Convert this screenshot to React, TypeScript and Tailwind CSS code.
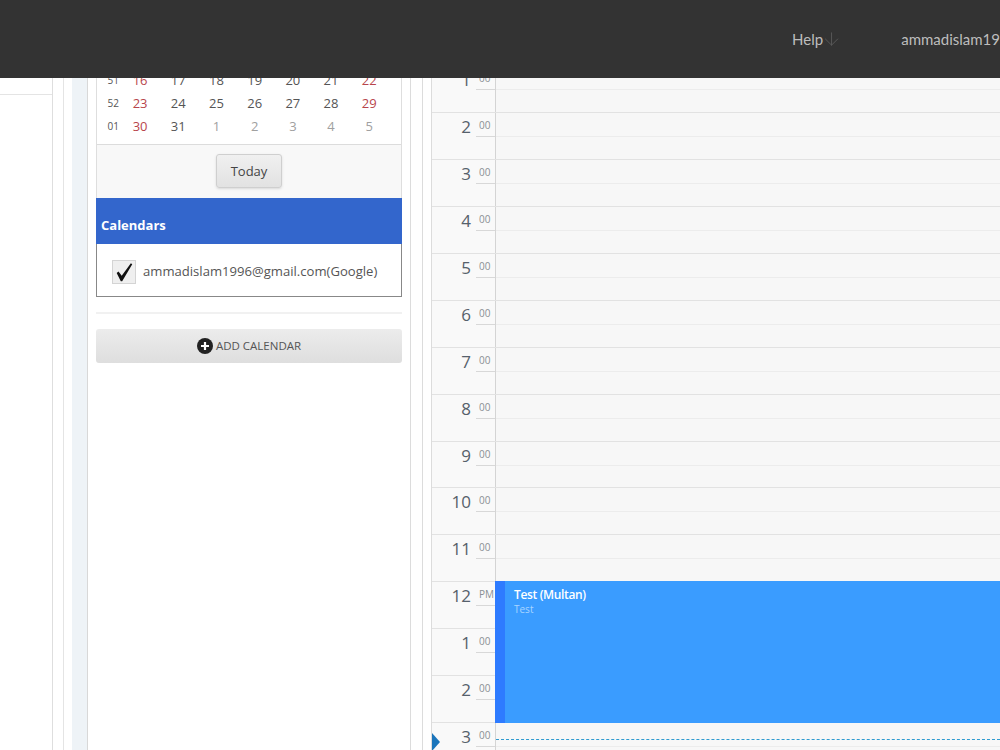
import { ArrowDown } from "lucide-react";

const weeks = [
  { week: "51", days: ["16", "17", "18", "19", "20", "21", "22"] },
  { week: "52", days: ["23", "24", "25", "26", "27", "28", "29"] },
  { week: "01", days: ["30", "31", "1", "2", "3", "4", "5"] },
];

const hours = ["1", "2", "3", "4", "5", "6", "7", "8", "9", "10", "11", "12", "1", "2", "3"];

function MonthRow({ week, days, index }: { week: string; days: string[]; index: number }) {
  return (
    <div className="grid h-[23px] grid-cols-[24px_repeat(7,38.2px)] items-center text-center text-[13px]">
      <span className="pr-[2px] text-right text-[10px] text-[#555]">{week}</span>
      {days.map((d, i) => {
        const nextMonth = index === 2 && i > 1;
        const weekend = i === 0 || i === 6;
        let color = "text-[#555]";
        if (nextMonth) color = "text-[#a0a0a0]";
        else if (weekend) color = "text-[#b8454b]";
        return (
          <span key={d} className={color}>
            {d}
          </span>
        );
      })}
    </div>
  );
}

function HourRow({ label, index }: { label: string; index: number }) {
  const noon = index === 11;
  return (
    <div className="flex h-[46.95px] shrink-0 border-b border-[#e2e2e2]">
      <div className="flex w-[64px] shrink-0 justify-end border-r border-[#d4d4d4] bg-[#f9f9f9]">
        <span className="mt-[2px] text-[17px] leading-6 text-[#56616b]">{label}</span>
        <div className="ml-[5px] h-[24px] w-[19px] border-b border-[#d8d8d8] pl-[3px] text-[10px] leading-[24px] text-[#8a8f94]">
          {noon ? "PM" : "00"}
        </div>
      </div>
      <div className="flex-1">
        <div className="h-[24px] border-b border-[#ececec]" />
      </div>
    </div>
  );
}

export default function App() {
  return (
    <div className="flex h-[750px] w-[1000px] flex-col overflow-hidden bg-white font-['Open_Sans',sans-serif]">
      <header className="z-10 flex h-[78px] shrink-0 items-center bg-[#333333] pl-[792px] font-['Lato',sans-serif] text-[15px] text-[#bdbdbd]">
        <span>Help</span>
        <ArrowDown className="-ml-[2px] h-[24px] w-[24px] text-[#5c5c5c]" strokeWidth={1} />
        <span className="ml-[59px] whitespace-nowrap">ammadislam19</span>
      </header>

      <div className="flex min-h-0 flex-1">
        <div className="w-[53px] shrink-0 border-r border-[#dedede]">
          <div className="h-[17px] border-b border-[#e4e4e4]" />
        </div>
        <div className="w-[11px] shrink-0 border-r border-[#e4e4e4]" />
        <div className="w-[8px] shrink-0" />
        <div className="w-[16px] shrink-0 border-r border-[#d8d8d8] bg-[#eef3f7]" />

        <aside className="w-[323px] shrink-0 border-r border-[#dcdcdc] pl-[8px] pr-[8px]">
          <div className="-mt-[9px] w-[306px] border-x border-[#dedede]">
            {weeks.map((w, i) => (
              <MonthRow key={w.week} week={w.week} days={w.days} index={i} />
            ))}
            <div className="mt-[6px] flex h-[54px] items-start justify-center border-t border-[#dcdcdc] bg-[#f8f8f8] pt-[9px]">
              <button className="h-[34px] w-[66px] rounded-[3px] border border-[#cfcfcf] bg-gradient-to-b from-[#f0f0f0] to-[#e2e2e2] pt-[1px] text-[13px] text-[#444] shadow-sm">
                Today
              </button>
            </div>
          </div>
          <div className="flex h-[46px] w-[306px] items-center bg-[#3366cc] pl-[5px] pt-[9px] text-[13px] font-bold text-white">
            Calendars
          </div>
          <div className="flex h-[53px] w-[306px] items-center border-x border-b border-[#888] pl-[15px] pt-[3px]">
            <span className="flex h-[24px] w-[24px] items-center justify-center border border-[#d4d4d4] bg-[#efefef]">
              <svg viewBox="0 0 24 24" className="h-[24px] w-[24px]">
                <path d="M4 13 L6 11.5 L9.5 16 L19.5 2.5 L21 3.5 L10 22 L8.5 22 Z" fill="#111" />
              </svg>
            </span>
            <span className="ml-[7px] whitespace-nowrap text-[13.1px] text-[#555]">ammadislam1996@gmail.com(Google)</span>
          </div>
          <div className="mt-[15px] h-[2px] w-[306px] bg-[#f1f1f1]" />
          <button className="mt-[15px] flex h-[34px] w-[306px] items-center justify-center rounded-[3px] bg-gradient-to-b from-[#ececec] to-[#dedede] text-[11.5px] text-[#555]">
            <svg viewBox="0 0 16 16" className="mr-[3px] h-[16px] w-[16px]">
              <circle cx="8" cy="8" r="8" fill="#222" />
              <path d="M8 4v8M4 8h8" stroke="#fff" strokeWidth="2.2" />
            </svg>
            ADD CALENDAR
          </button>
        </aside>

        <div className="w-[12px] shrink-0 border-r border-[#dcdcdc]" />
        <div className="w-[9px] shrink-0 border-r border-[#dcdcdc]" />

        <main className="relative min-w-0 flex-1 bg-[#f7f7f7]">
          <div className="-mt-[12px] flex flex-col">
            {hours.map((h, i) => (
              <HourRow key={i} label={h} index={i} />
            ))}
          </div>
          <div className="absolute left-[63px] right-0 top-[503px] flex h-[142px] bg-[#3a9cff]">
            <div className="w-[10px] bg-[#2e7bff]" />
            <div className="pl-[9px] pt-[4px]">
              <div className="text-[12px] font-semibold leading-[19px] tracking-[-0.35px] text-white">Test (Multan)</div>
              <div className="text-[10px] leading-[11px] text-[#a9d5ff]">Test</div>
            </div>
          </div>
          <div className="absolute left-[64px] right-0 top-[661px] border-t border-dashed border-[#2f9bd0]" />
          <div className="absolute left-0 top-[655px] h-0 w-0 border-y-[9px] border-l-[8px] border-y-transparent border-l-[#1b75bb]" />
        </main>
      </div>
    </div>
  );
}
